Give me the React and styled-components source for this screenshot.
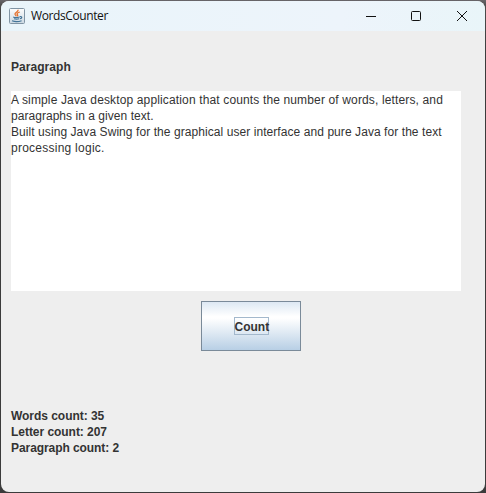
import React from "react";
import styled, { createGlobalStyle } from "styled-components";

const GlobalStyle = createGlobalStyle`
  * { box-sizing: border-box; }
  html, body { margin: 0; padding: 0; }
  body { background: #3b3b3b; overflow: hidden; }
`;

const Desktop = styled.div`
  width: 486px;
  height: 493px;
  padding: 1px;
  background: linear-gradient(#69666a 0, #4b4b4b 6px, #3b3b3b 60px);
`;

const Window = styled.main`
  display: flex;
  flex-direction: column;
  width: 484px;
  height: 491px;
  overflow: hidden;
  border-radius: 8px;
  background: #eeeeee;
  color: #333333;
  font-family: "Liberation Sans", Arial, sans-serif;
  font-size: 12px;
  line-height: 16px;
`;

const TitleBar = styled.header`
  display: flex;
  align-items: center;
  flex: 0 0 30px;
  padding-left: 8px;
  background: linear-gradient(90deg, #e9f4fa, #edf4fb 70%, #e9f5f9);
`;

const Title = styled.h1`
  flex: 1;
  margin: 0 0 0 6px;
  color: #111111;
  font: 400 12px/16px "Open Sans", "Noto Sans", sans-serif;
  letter-spacing: -0.4px;
`;

const WindowButton = styled.button`
  display: flex;
  align-items: center;
  justify-content: center;
  width: 46px;
  height: 30px;
  padding: 0;
  border: 0;
  background: transparent;
  color: #111111;
`;

const Content = styled.section`
  display: flex;
  flex-direction: column;
  padding: 28px 10px 0;
`;

const Label = styled.div`
  height: 16px;
  font-weight: 700;
  white-space: nowrap;
  letter-spacing: ${(p) => p.$tracking || 0}px;
`;

const TextArea = styled.div`
  width: 450px;
  height: 200px;
  margin-top: 16px;
  padding-top: 1px;
  background: #ffffff;
`;

const Line = styled.div`
  height: 16px;
  white-space: nowrap;
  letter-spacing: ${(p) => p.$tracking}px;
`;

const CountButton = styled.button`
  display: flex;
  align-items: center;
  justify-content: center;
  width: 100px;
  height: 50px;
  margin: 10px 0 0 190px;
  padding: 0;
  border: 1px solid #7a8a99;
  background: linear-gradient(#dde8f3 0%, #ffffff 30%, #ffffff 34%, #b8cfe5 100%);
  color: #333333;
  font: 700 12px/18px "Liberation Sans", Arial, sans-serif;
`;

const FocusRing = styled.span`
  width: 35px;
  height: 18px;
  border: 1px solid #a3b8cc;
  white-space: nowrap;
`;

const Results = styled.div`
  margin-top: 57px;
`;

const JavaIcon = () => (
  <svg width="16" height="16" viewBox="0 0 16 16" fill="none">
    <defs>
      <linearGradient id="tile" x1="0" y1="0" x2="0" y2="1">
        <stop stopColor="#fdfdfd" />
        <stop offset="1" stopColor="#cbd8e2" />
      </linearGradient>
    </defs>
    <rect x=".5" y=".5" width="15" height="15" rx="1" fill="url(#tile)" stroke="#8094a4" />
    <path d="M9.2 1.8C9.2 4 5.7 4.5 6 6.2c.2.8 1 1 1.3 2M10.8 4C7.8 5 7.6 6 8.6 7c.4.5.1.9-.2 1.3" stroke="#e5702b" strokeWidth="1.3" />
    <path d="M4.2 9c1.4.6 4.7.5 6.4 0M5 10.8c1.5.5 3.6.5 5.2 0M3 12.8c2.6 1 7 .9 9.6-.1M10.8 8.6c2.8-.4 2.4 1.7.2 2.2" stroke="#437498" strokeWidth="1.15" />
  </svg>
);

const ControlIcon = ({ children }) => (
  <svg width="12" height="12" viewBox="0 0 12 12" fill="none" stroke="currentColor">
    {children}
  </svg>
);

const paragraph = [
  ["A simple Java desktop application that counts the number of words, letters, and", 0.14],
  ["paragraphs in a given text.", 0.04],
  ["Built using Java Swing for the graphical user interface and pure Java for the text", 0.07],
  ["processing logic.", 0.25],
];

export default function App() {
  return (
    <>
      <GlobalStyle />
      <Desktop>
        <Window>
          <TitleBar>
            <JavaIcon />
            <Title>WordsCounter</Title>
            <WindowButton aria-label="Minimize">
              <ControlIcon><path d="M2 6.5h10" /></ControlIcon>
            </WindowButton>
            <WindowButton aria-label="Maximize">
              <ControlIcon><rect x="1.5" y="1.5" width="9" height="9" rx="1" /></ControlIcon>
            </WindowButton>
            <WindowButton aria-label="Close">
              <ControlIcon><path d="m1 1 10 10M11 1 1 11" /></ControlIcon>
            </WindowButton>
          </TitleBar>
          <Content>
            <Label $tracking={0.05}>Paragraph</Label>
            <TextArea>
              {paragraph.map(([text, tracking]) => (
                <Line key={text} $tracking={tracking}>{text}</Line>
              ))}
            </TextArea>
            <CountButton><FocusRing>Count</FocusRing></CountButton>
            <Results>
              <Label $tracking={-0.04}>Words count: 35</Label>
              <Label $tracking={-0.04}>Letter count: 207</Label>
              <Label $tracking={-0.07}>Paragraph count: 2</Label>
            </Results>
          </Content>
        </Window>
      </Desktop>
    </>
  );
}
